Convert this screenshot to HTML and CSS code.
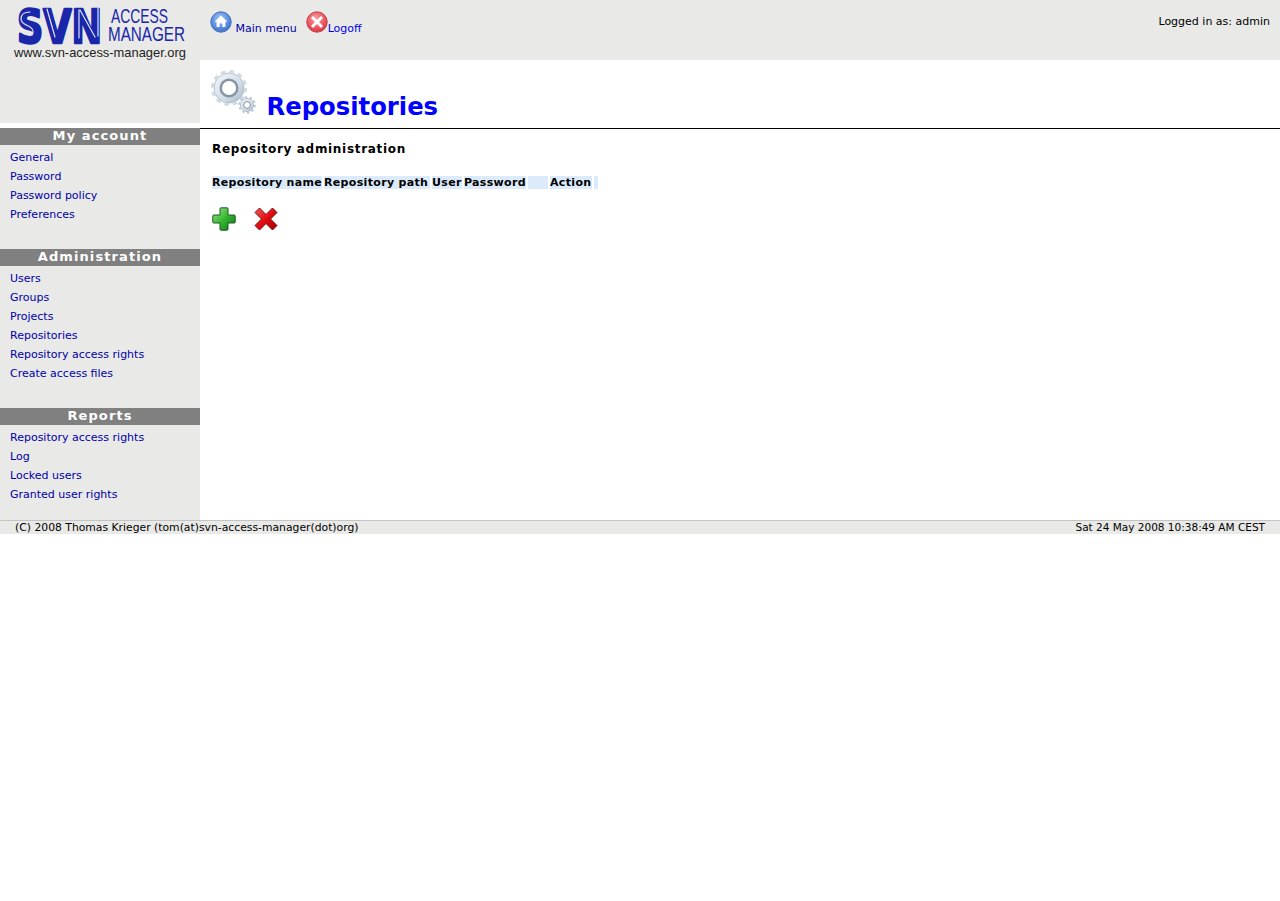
FILE: index.html
```html
<!DOCTYPE html>
<html lang="en">
<head>
<meta charset="utf-8">
<title>SVN Access Manager - Repositories</title>
<link rel="stylesheet" href="styles.css">
</head>
<body>
<svg class="defs" width="0" height="0" aria-hidden="true">
  <defs>
    <radialGradient id="gBlue" cx="45%" cy="35%" r="70%"><stop offset="0" stop-color="#a9c8f2"/><stop offset=".6" stop-color="#5b8fe0"/><stop offset="1" stop-color="#3c6cc4"/></radialGradient>
    <radialGradient id="gRed" cx="45%" cy="35%" r="70%"><stop offset="0" stop-color="#f7a0a6"/><stop offset=".6" stop-color="#ea5a62"/><stop offset="1" stop-color="#cf3540"/></radialGradient>
    <linearGradient id="gGreen" x1="0" y1="0" x2="1" y2="1"><stop offset="0" stop-color="#9be388"/><stop offset=".5" stop-color="#35b832"/><stop offset="1" stop-color="#157015"/></linearGradient>
    <linearGradient id="gCross" x1="0" y1="0" x2="1" y2="1"><stop offset="0" stop-color="#f25a5a"/><stop offset=".5" stop-color="#e00c12"/><stop offset="1" stop-color="#a00000"/></linearGradient>
    <linearGradient id="gGear" x1="0" y1="0" x2="1" y2="1"><stop offset="0" stop-color="#f4f7fa"/><stop offset=".6" stop-color="#d3dee7"/><stop offset="1" stop-color="#a5b6c5"/></linearGradient>
  </defs>
</svg>
<header class="topbar">
  <div class="logo">
    <svg width="200" height="60" viewBox="0 0 200 60" role="img" aria-label="SVN Access Manager">
      <text class="logo-svn" x="17" y="43" textLength="85" lengthAdjust="spacingAndGlyphs">SVN</text>
      <path class="logo-hl" d="M30 12c-6 0-9 3-9 7 0 5 6 6 9 8 3 2 4 5 2 8M47 9l8 28M79 10v28M80 10l15 27M98 8v28"/>
      <text class="logo-word" x="111" y="23" textLength="57" lengthAdjust="spacingAndGlyphs">ACCESS</text>
      <text class="logo-word" x="108" y="41" textLength="77" lengthAdjust="spacingAndGlyphs">MANAGER</text>
      <text class="logo-url" x="14" y="57" textLength="172" lengthAdjust="spacingAndGlyphs">www.svn-access-manager.org</text>
    </svg>
  </div>
  <nav class="topnav">
    <a class="navlink" href="#"><svg class="ico" width="22" height="22" viewBox="0 0 22 22"><circle cx="11" cy="11" r="10.2" fill="url(#gBlue)" stroke="#3f6fc0"/><path d="M11 4.500 4.600 10.800h2v5.200h3v-3.600h2.800V16h3v-5.200h2z" fill="#fff"/></svg> Main menu</a><span class="navgap"></span><a class="navlink navlink-alt" href="#"><svg class="ico" width="22" height="22" viewBox="0 0 22 22"><circle cx="11" cy="11" r="10.2" fill="url(#gRed)" stroke="#c93a44"/><path d="m7 5 4 4 4-4 2 2-4 4 4 4-2 2-4-4-4 4-2-2 4-4-4-4z" fill="#fff"/></svg>Logoff</a>
  </nav>
  <div class="userinfo">Logged in as: admin</div>
</header>
<div class="layout">
  <aside class="sidebar">
    <div class="sidebar-top"></div>
    <section class="menu">
      <h3 class="menu-title">My account</h3>
      <ul class="menu-list">
        <li><a href="#">General</a></li>
        <li><a href="#">Password</a></li>
        <li><a href="#">Password policy</a></li>
        <li><a href="#">Preferences</a></li>
      </ul>
    </section>
    <section class="menu">
      <h3 class="menu-title">Administration</h3>
      <ul class="menu-list">
        <li><a href="#">Users</a></li>
        <li><a href="#">Groups</a></li>
        <li><a href="#">Projects</a></li>
        <li><a href="#">Repositories</a></li>
        <li><a href="#">Repository access rights</a></li>
        <li><a href="#">Create access files</a></li>
      </ul>
    </section>
    <section class="menu">
      <h3 class="menu-title">Reports</h3>
      <ul class="menu-list">
        <li><a href="#">Repository access rights</a></li>
        <li><a href="#">Log</a></li>
        <li><a href="#">Locked users</a></li>
        <li><a href="#">Granted user rights</a></li>
      </ul>
    </section>
  </aside>
  <main class="content">
    <div class="page-head">
      <h1 class="page-title"><svg class="title-ico" width="48" height="48" viewBox="0 0 48 48">
        <circle cx="19" cy="20" r="15" fill="url(#gGear)" stroke="#9fb1c1" stroke-width=".8"/>
        <circle cx="19" cy="20" r="16.400" fill="none" stroke="#cfdae3" stroke-width="3.200" stroke-dasharray="4.500 4.090"/>
        <circle cx="19" cy="20" r="9.500" fill="#8796a5"/>
        <circle cx="19" cy="20" r="7" fill="#fff"/>
        <circle cx="37" cy="37" r="6.500" fill="url(#gGear)" stroke="#9fb1c1" stroke-width=".8"/>
        <circle cx="37" cy="37" r="7.800" fill="none" stroke="#bccad6" stroke-width="2" stroke-dasharray="2.450 2.450"/>
        <circle cx="37" cy="37" r="3.400" fill="#fff" stroke="#7f90a0"/>
      </svg> Repositories</h1>
    </div>
    <div class="page-body">
      <h2 class="subtitle">Repository administration</h2>
      <table class="grid">
        <thead>
          <tr>
            <th class="c-name">Repository name</th>
            <th class="c-path">Repository path</th>
            <th class="c-user">User</th>
            <th class="c-pass">Password</th>
            <th class="c-blank"></th>
            <th class="c-action">Action</th>
            <th class="c-end"></th>
          </tr>
        </thead>
      </table>
      <div class="actions">
        <a href="#" aria-label="Add"><svg width="24" height="24" viewBox="0 0 24 24"><path d="M9 .8h6a1 1 0 0 1 1 1V8h6.200a1 1 0 0 1 1 1v6a1 1 0 0 1-1 1H16v6.200a1 1 0 0 1-1 1H9a1 1 0 0 1-1-1V16H1.800a1 1 0 0 1-1-1V9a1 1 0 0 1 1-1H8V1.800a1 1 0 0 1 1-1z" fill="url(#gGreen)" stroke="#1d5a25"/></svg></a>
        <a href="#" aria-label="Delete"><svg width="24" height="24" viewBox="0 0 24 24"><path d="M5.500 1 12 7.500 18.500 1 23 5.500 16.500 12 23 18.500 18.500 23 12 16.500 5.500 23 1 18.500 7.500 12 1 5.500z" fill="url(#gCross)" stroke="#7c0a0a" stroke-linejoin="round"/></svg></a>
      </div>
    </div>
  </main>
</div>
<footer class="footer">
  <span class="foot-left">(C) 2008 Thomas Krieger (tom(at)svn-access-manager(dot)org)</span>
  <span class="foot-right">Sat 24 May 2008 10:38:49 AM CEST</span>
</footer>
</body>
</html>
```
FILE: styles.css
```css
* { box-sizing: border-box; }
html, body { margin: 0; padding: 0; background: #fff; }
body { font-family: "DejaVu Sans", sans-serif; font-size: 11px; color: #000; }
a { text-decoration: none; }
.defs { position: absolute; }

.topbar { display: flex; height: 60px; background: #e9e9e7; }
.logo { width: 200px; flex: none; height: 60px; }
.logo svg { display: block; }
.logo-svn { font-family: "DejaVu Sans", sans-serif; font-weight: bold; font-size: 46px; fill: #1a27ab; stroke: #1a27ab; stroke-width: 2.500px; stroke-linejoin: round; }
.logo-hl { fill: none; stroke: #dfe3f4; stroke-width: 1.200px; stroke-linecap: round; }
.logo-word { font-family: "Liberation Sans", sans-serif; font-size: 21px; fill: #1a27ab; }
.logo-url { font-family: "Liberation Sans", sans-serif; font-size: 13px; fill: #222; }
.topnav { flex: 1; padding: 11px 0 0 10px; white-space: nowrap; }
.navlink { color: #0000aa; }
.navlink-alt { color: #0000ee; }
.navgap { display: inline-block; width: 9px; }
.ico { vertical-align: baseline; margin-bottom: -1px; }
.userinfo { padding: 15px 10px 0 0; line-height: 13px; }

.layout { display: flex; height: 460px; }
.sidebar { width: 200px; flex: none; background: #e9e9e7; }
.sidebar-top { height: 68px; background: #e9e9e7; border-bottom: 5px solid #fff; }
.menu { padding-bottom: 25px; }
.menu-title { margin: 0; height: 17px; line-height: 16px; background: #808080; color: #fff; font-size: 13px; font-weight: bold; letter-spacing: 1.100px; text-align: center; }
.menu-list { list-style: none; margin: 0; padding: 3px 0 0 10px; }
.menu-list li { height: 19px; line-height: 19px; }
.menu-list a { color: #0000aa; }

.content { flex: 1; min-width: 0; }
.page-head { height: 69px; border-bottom: 1px solid #000; padding: 8px 0 0 10px; }
.page-title { margin: 0; font-size: 24.300px; font-weight: bold; line-height: 48px; color: #0000ff; white-space: nowrap; }
.title-ico { vertical-align: baseline; margin-bottom: -1px; }
.page-body { padding: 0 0 0 12px; }
.subtitle { margin: 0; padding-top: 13px; font-size: 12px; font-weight: bold; line-height: 15px; letter-spacing: .68px; }
.grid { border-collapse: separate; border-spacing: 2px; margin: 17px 0 0 -2px; table-layout: fixed; width: 388px; }
.grid th { padding: 0; height: 13px; line-height: 13px; background: #dcebfb; font-size: 11px; font-weight: bold; letter-spacing: .33px; text-align: left; white-space: nowrap; overflow: hidden; }
.c-name { width: 110px; }
.c-path { width: 106px; }
.c-user { width: 30px; }
.c-pass { width: 62px; }
.c-blank { width: 20px; }
.c-action { width: 42px; }
.c-end { width: 4px; }
.actions { display: flex; gap: 18px; margin-top: 16px; }
.actions a, .actions svg { display: block; }

.footer { display: flex; justify-content: space-between; height: 14px; padding: 0 15px; background: #e9e9e7; border-top: 1px solid #c4c4c4; line-height: 13px; }
.foot-left { font-size: 10.800px; }
.foot-right { font-size: 10.500px; }
```
